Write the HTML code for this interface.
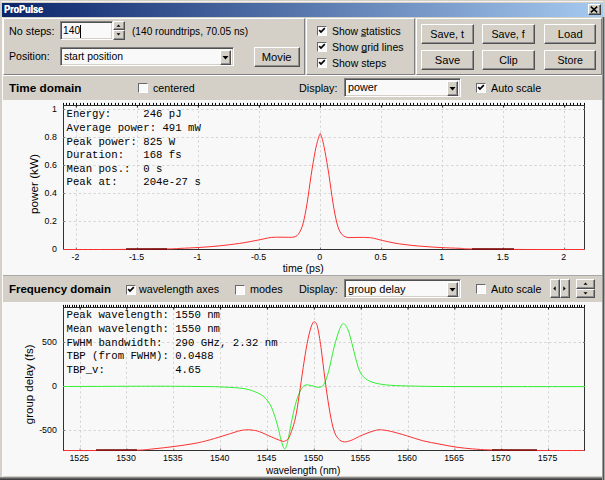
<!DOCTYPE html>
<html lang="en"><head><meta charset="utf-8"><title>ProPulse</title>
<style>
html,body{margin:0;padding:0}
body{width:605px;height:480px;overflow:hidden;background:#d4d0c8;font-family:"Liberation Sans",sans-serif;font-size:11px;color:#000;position:relative}
div,span{box-sizing:border-box}
.a{position:absolute}
.title{position:absolute;left:2px;top:3px;width:601px;height:14px;background:linear-gradient(90deg,#0a246a 0%,#a6caf0 100%)}
.title span{position:absolute;left:2px;top:0;font-weight:bold;font-size:10px;line-height:14px;color:#fff;transform-origin:0 0;transform:translateY(0.4px) scaleX(0.9);text-shadow:0.4px 0 0 #fff}
.close{position:absolute;left:588px;top:4px;width:13px;height:11px;background:#d4d0c8;border:1px solid;border-color:#fff #404040 #404040 #fff;box-shadow:inset -1px -1px 0 #808080}
.panel{position:absolute;border:1px solid;border-color:#fff #808080 #808080 #fff}
.lbl{position:absolute;white-space:nowrap;line-height:13px;font-size:11px;transform-origin:0 0}
.b{font-weight:bold}
.btn{position:absolute;text-align:center;background:#d4d0c8;border:1px solid;border-color:#fff #505050 #505050 #fff;box-shadow:inset -1px -1px 0 #909090;font-size:11px;white-space:nowrap}
.sunk{position:absolute;background:#f9f9f9;border:1px solid;border-color:#808080 #fff #fff #808080;box-shadow:inset 1px 1px 0 #505050, inset -1px -1px 0 #d4d0c8}
.ctext{position:absolute;left:4px;top:2px;line-height:13px;font-size:11px;white-space:nowrap;transform-origin:0 0}
.cbtn{position:absolute;right:2px;top:2px;width:11px;background:#d4d0c8;border:1px solid;border-color:#fff #505050 #505050 #fff;box-shadow:inset -1px -1px 0 #909090;display:flex;align-items:center;justify-content:center}
.chk{position:absolute;width:10px;height:10px;background:#f9f9f9;border:1px solid;border-color:#686868 #fff #fff #686868}
.white{position:absolute;background:#f8f8f8}
svg text{font-family:"Liberation Sans",sans-serif}
.tk{font-size:8.8px;fill:#000}
.ax{font-size:10.3px;fill:#000}
.ay{font-size:11.5px;fill:#000}
.st{font-family:"Liberation Mono",monospace;font-size:10.67px;fill:#000}
u{text-decoration:underline;text-decoration-skip-ink:none}
</style></head><body>
<!-- window frame -->
<div class="a" style="left:1px;top:1px;width:602px;height:1px;background:#f4f2ee"></div>
<div class="a" style="left:2px;top:17px;width:1px;height:460px;background:#fbfaf8"></div>
<div class="a" style="left:0;top:477px;width:605px;height:1px;background:#8c8c8c"></div>
<div class="a" style="left:0;top:478px;width:605px;height:1px;background:#606060"></div>
<div class="a" style="left:0;top:479px;width:605px;height:1px;background:#404040"></div>
<div class="a" style="left:602px;top:17px;width:1px;height:463px;background:#9a9a9a"></div>
<div class="a" style="left:603px;top:17px;width:1px;height:463px;background:#545454"></div>
<div class="a" style="left:604px;top:17px;width:1px;height:463px;background:#a8a8a8"></div>
<!-- title bar -->
<div class="title"><span>ProPulse</span></div>
<div class="close"><svg width="8" height="7" viewBox="0 0 8 7" style="position:absolute;left:1px;top:1px"><path d="M0.8,0.6 L7.2,6.4 M7.2,0.6 L0.8,6.4" stroke="#000" stroke-width="1.5" fill="none"/></svg></div>

<!-- top panels -->
<div class="panel" style="left:3px;top:18px;width:302px;height:57px"></div>
<div class="panel" style="left:306px;top:18px;width:109px;height:57px"></div>
<div class="panel" style="left:416px;top:18px;width:186px;height:57px"></div>

<div class="lbl " style="left:9px;top:24px;transform:translateY(0.5px) scaleX(0.9793)">No steps:</div>
<div class="sunk" style="left:60px;top:21px;width:53px;height:19px"><span class="ctext" style="left:1.8px;top:2px;transform:scaleX(0.93)">140</span><div class="a" style="left:19px;top:3px;width:1px;height:13px;background:#000"></div></div>
<div class="btn" style="left:113px;top:21px;width:12px;height:9px"><svg width="5" height="3" viewBox="0 0 5 3" style="position:absolute;left:2px;top:2px"><path d="M0.5,2.8 H4.5 L2.5,0.4 Z" fill="#000"/></svg></div>
<div class="btn" style="left:113px;top:30px;width:12px;height:10px"><svg width="5" height="3" viewBox="0 0 5 3" style="position:absolute;left:2px;top:2px"><path d="M0.5,0.2 H4.5 L2.5,2.6 Z" fill="#000"/></svg></div>
<div class="lbl " style="left:131.5px;top:24px;transform:translateY(0.5px) scaleX(0.9210)">(140 roundtrips, 70.05 ns)</div>
<div class="lbl " style="left:9px;top:50px;transform:scaleX(0.9623)">Position:</div>
<div class="sunk" style="left:60px;top:47px;width:174px;height:19px"><span class="ctext" style="left:2.8px;top:2px;transform:scaleX(0.9461)">start position</span><div class="cbtn" style="height:15px"><svg width="7" height="4" viewBox="0 0 7 4"><path d="M0.5,0 H6.5 L3.5,3.5 Z" fill="#000"/></svg></div></div>
<div class="btn" style="left:254px;top:47px;width:46px;height:20px;line-height:18px"><span style="display:inline-block;transform:scaleX(1.0157)">Movie</span></div>

<div class="chk" style="left:317px;top:26px"><svg width="10" height="10" viewBox="0 0 10 10" style="position:absolute;left:-1px;top:-1px"><path d="M2.2,4.2 L4,6 L7.8,2.2" stroke="#000" stroke-width="1.7" fill="none"/></svg></div><div class="lbl " style="left:332px;top:24px;transform:translateY(0.5px) scaleX(0.9458)">Show <u>s</u>tatistics</div>
<div class="chk" style="left:317px;top:42px"><svg width="10" height="10" viewBox="0 0 10 10" style="position:absolute;left:-1px;top:-1px"><path d="M2.2,4.2 L4,6 L7.8,2.2" stroke="#000" stroke-width="1.7" fill="none"/></svg></div><div class="lbl " style="left:332px;top:40px;transform:translateY(0.5px) scaleX(0.9586)">Show <u>g</u>rid lines</div>
<div class="chk" style="left:317px;top:58px"><svg width="10" height="10" viewBox="0 0 10 10" style="position:absolute;left:-1px;top:-1px"><path d="M2.2,4.2 L4,6 L7.8,2.2" stroke="#000" stroke-width="1.7" fill="none"/></svg></div><div class="lbl " style="left:332px;top:56px;transform:translateY(0.5px) scaleX(0.9550)">Show steps</div>

<div class="btn" style="left:421px;top:24px;width:53px;height:20px;line-height:18px"><span style="display:inline-block;transform:scaleX(0.9843)">Save, t</span></div>
<div class="btn" style="left:482px;top:24px;width:53px;height:20px;line-height:18px"><span style="display:inline-block;transform:scaleX(0.9726)">Save, f</span></div>
<div class="btn" style="left:544px;top:24px;width:52px;height:20px;line-height:18px"><span style="display:inline-block;transform:scaleX(1.0136)">Load</span></div>
<div class="btn" style="left:421px;top:50px;width:53px;height:20px;line-height:18px"><span style="display:inline-block;transform:scaleX(1.0131)">Save</span></div>
<div class="btn" style="left:482px;top:50px;width:53px;height:20px;line-height:18px"><span style="display:inline-block;transform:scaleX(0.9763)">Clip</span></div>
<div class="btn" style="left:544px;top:50px;width:52px;height:20px;line-height:18px"><span style="display:inline-block;transform:scaleX(0.9661)">Store</span></div>

<!-- time domain strip -->
<div class="a" style="left:3px;top:75px;width:599px;height:1px;background:#fff"></div>
<div class="lbl b" style="left:9px;top:82px;transform:scaleX(1.0719)">Time domain</div>
<div class="chk" style="left:138px;top:83px"></div><div class="lbl " style="left:153px;top:82px;transform:scaleX(0.9765)">centered</div>
<div class="lbl " style="left:299px;top:82px;transform:scaleX(0.9841)">Display:</div>
<div class="sunk" style="left:344px;top:78px;width:117px;height:19px"><span class="ctext" style="left:2.5px;top:2px;transform:scaleX(0.9814)">power</span><div class="cbtn" style="height:15px"><svg width="7" height="4" viewBox="0 0 7 4"><path d="M0.5,0 H6.5 L3.5,3.5 Z" fill="#000"/></svg></div></div>
<div class="chk" style="left:476px;top:83px"><svg width="10" height="10" viewBox="0 0 10 10" style="position:absolute;left:-1px;top:-1px"><path d="M2.2,4.2 L4,6 L7.8,2.2" stroke="#000" stroke-width="1.7" fill="none"/></svg></div><div class="lbl " style="left:491px;top:82px;transform:scaleX(0.9774)">Auto scale</div>

<!-- plot area 1 -->
<div class="white" style="left:3px;top:100px;width:599px;height:175px"></div>
<!-- freq strip -->
<div class="a" style="left:3px;top:275px;width:599px;height:1px;background:#a8a8a8"></div>
<div class="lbl b" style="left:9px;top:283px;transform:scaleX(1.0431)">Frequency domain</div>
<div class="chk" style="left:126px;top:285px"><svg width="10" height="10" viewBox="0 0 10 10" style="position:absolute;left:-1px;top:-1px"><path d="M2.2,4.2 L4,6 L7.8,2.2" stroke="#000" stroke-width="1.7" fill="none"/></svg></div><div class="lbl " style="left:139px;top:283px;transform:scaleX(0.9764)">wavelength axes</div>
<div class="chk" style="left:235px;top:285px"></div><div class="lbl " style="left:249.5px;top:283px;transform:scaleX(0.9875)">modes</div>
<div class="lbl " style="left:299px;top:283px;transform:scaleX(0.9892)">Display:</div>
<div class="sunk" style="left:344px;top:279px;width:117px;height:19px"><span class="ctext" style="left:2.5px;top:3px;transform:scaleX(1.0021)">group delay</span><div class="cbtn" style="height:15px"><svg width="7" height="4" viewBox="0 0 7 4"><path d="M0.5,0 H6.5 L3.5,3.5 Z" fill="#000"/></svg></div></div>
<div class="chk" style="left:476px;top:284px"></div><div class="lbl " style="left:490.5px;top:283px;transform:scaleX(0.9832)">Auto scale</div>
<div class="btn" style="left:550px;top:279px;width:10px;height:19px"><svg width="3" height="5" viewBox="0 0 3 5" style="position:absolute;left:2px;top:6px"><path d="M2.7,0.3 V4.7 L0.3,2.5 Z" fill="#000"/></svg></div>
<div class="btn" style="left:560px;top:279px;width:10px;height:19px"><svg width="3" height="5" viewBox="0 0 3 5" style="position:absolute;left:2px;top:6px"><path d="M0.3,0.3 V4.7 L2.7,2.5 Z" fill="#000"/></svg></div>
<div class="btn" style="left:576px;top:279px;width:19px;height:10px"><svg width="5" height="3" viewBox="0 0 5 3" style="position:absolute;left:6px;top:2px"><path d="M0.5,2.8 H4.5 L2.5,0.4 Z" fill="#000"/></svg></div>
<div class="btn" style="left:576px;top:289px;width:19px;height:9px"><svg width="5" height="3" viewBox="0 0 5 3" style="position:absolute;left:6px;top:2px"><path d="M0.5,0.2 H4.5 L2.5,2.6 Z" fill="#000"/></svg></div>
<!-- plot area 2 -->
<div class="white" style="left:3px;top:302px;width:599px;height:174px"></div>

<svg class="a" style="left:0;top:0" width="605" height="480" viewBox="0 0 605 480">
<path d="M76.5,106 V249 M137.5,106 V249 M198.5,106 V249 M259.5,106 V249 M320.5,106 V249 M381.5,106 V249 M442.5,106 V249 M503.5,106 V249 M564.5,106 V249 " stroke="#d4d4d4" stroke-width="1" stroke-dasharray="2.2,2.7" fill="none"/>
<path d="M64,249.5 H585 M64,221.5 H585 M64,193.5 H585 M64,165.5 H585 M64,137.5 H585 M64,109.5 H585 " stroke="#d4d4d4" stroke-width="1" stroke-dasharray="2.4,2.5" fill="none"/>
<path d="M63.5,102.9 V105.5 M66.5,102.9 V105.5 M69.5,102.9 V105.5 M73.5,102.9 V105.5 M76.5,102.9 V105.5 M80.5,102.9 V105.5 M83.5,102.9 V105.5 M87.5,102.9 V105.5 M90.5,102.9 V105.5 M94.5,102.9 V105.5 M97.5,102.9 V105.5 M101.5,102.9 V105.5 M104.5,102.9 V105.5 M108.5,102.9 V105.5 M111.5,102.9 V105.5 M115.5,102.9 V105.5 M118.5,102.9 V105.5 M122.5,102.9 V105.5 M125.5,102.9 V105.5 M128.5,102.9 V105.5 M132.5,102.9 V105.5 M135.5,102.9 V105.5 M139.5,102.9 V105.5 M142.5,102.9 V105.5 M146.5,102.9 V105.5 M149.5,102.9 V105.5 M153.5,102.9 V105.5 M156.5,102.9 V105.5 M160.5,102.9 V105.5 M163.5,102.9 V105.5 M167.5,102.9 V105.5 M170.5,102.9 V105.5 M174.5,102.9 V105.5 M177.5,102.9 V105.5 M181.5,102.9 V105.5 M184.5,102.9 V105.5 M188.5,102.9 V105.5 M191.5,102.9 V105.5 M194.5,102.9 V105.5 M198.5,102.9 V105.5 M201.5,102.9 V105.5 M205.5,102.9 V105.5 M208.5,102.9 V105.5 M212.5,102.9 V105.5 M215.5,102.9 V105.5 M219.5,102.9 V105.5 M222.5,102.9 V105.5 M226.5,102.9 V105.5 M229.5,102.9 V105.5 M233.5,102.9 V105.5 M236.5,102.9 V105.5 M240.5,102.9 V105.5 M243.5,102.9 V105.5 M247.5,102.9 V105.5 M250.5,102.9 V105.5 M254.5,102.9 V105.5 M257.5,102.9 V105.5 M260.5,102.9 V105.5 M264.5,102.9 V105.5 M267.5,102.9 V105.5 M271.5,102.9 V105.5 M274.5,102.9 V105.5 M278.5,102.9 V105.5 M281.5,102.9 V105.5 M285.5,102.9 V105.5 M288.5,102.9 V105.5 M292.5,102.9 V105.5 M295.5,102.9 V105.5 M299.5,102.9 V105.5 M302.5,102.9 V105.5 M306.5,102.9 V105.5 M309.5,102.9 V105.5 M313.5,102.9 V105.5 M316.5,102.9 V105.5 M320.5,102.9 V105.5 M323.5,102.9 V105.5 M326.5,102.9 V105.5 M330.5,102.9 V105.5 M333.5,102.9 V105.5 M337.5,102.9 V105.5 M340.5,102.9 V105.5 M344.5,102.9 V105.5 M347.5,102.9 V105.5 M351.5,102.9 V105.5 M354.5,102.9 V105.5 M358.5,102.9 V105.5 M361.5,102.9 V105.5 M365.5,102.9 V105.5 M368.5,102.9 V105.5 M372.5,102.9 V105.5 M375.5,102.9 V105.5 M379.5,102.9 V105.5 M382.5,102.9 V105.5 M386.5,102.9 V105.5 M389.5,102.9 V105.5 M392.5,102.9 V105.5 M396.5,102.9 V105.5 M399.5,102.9 V105.5 M403.5,102.9 V105.5 M406.5,102.9 V105.5 M410.5,102.9 V105.5 M413.5,102.9 V105.5 M417.5,102.9 V105.5 M420.5,102.9 V105.5 M424.5,102.9 V105.5 M427.5,102.9 V105.5 M431.5,102.9 V105.5 M434.5,102.9 V105.5 M438.5,102.9 V105.5 M441.5,102.9 V105.5 M445.5,102.9 V105.5 M448.5,102.9 V105.5 M452.5,102.9 V105.5 M455.5,102.9 V105.5 M458.5,102.9 V105.5 M462.5,102.9 V105.5 M465.5,102.9 V105.5 M469.5,102.9 V105.5 M472.5,102.9 V105.5 M476.5,102.9 V105.5 M479.5,102.9 V105.5 M483.5,102.9 V105.5 M486.5,102.9 V105.5 M490.5,102.9 V105.5 M493.5,102.9 V105.5 M497.5,102.9 V105.5 M500.5,102.9 V105.5 M504.5,102.9 V105.5 M507.5,102.9 V105.5 M511.5,102.9 V105.5 M514.5,102.9 V105.5 M518.5,102.9 V105.5 M521.5,102.9 V105.5 M524.5,102.9 V105.5 M528.5,102.9 V105.5 M531.5,102.9 V105.5 M535.5,102.9 V105.5 M538.5,102.9 V105.5 M542.5,102.9 V105.5 M545.5,102.9 V105.5 M549.5,102.9 V105.5 M552.5,102.9 V105.5 M556.5,102.9 V105.5 M559.5,102.9 V105.5 M563.5,102.9 V105.5 M566.5,102.9 V105.5 M570.5,102.9 V105.5 M573.5,102.9 V105.5 M577.5,102.9 V105.5 M580.5,102.9 V105.5 M584.5,102.9 V105.5 " stroke="#000" stroke-width="1" fill="none"/>
<rect x="63.5" y="105.5" width="521" height="144" stroke="#303030" stroke-width="1" fill="none"/>
<path d="M76.3,105 V107.5 M137.4,105 V107.5 M198.4,105 V107.5 M259.4,105 V107.5 M320.5,105 V107.5 M381.6,105 V107.5 M442.6,105 V107.5 M503.6,105 V107.5 M564.7,105 V107.5 " stroke="#181818" stroke-width="1" fill="none"/>
<path d="M76.3,247.5 V249 M137.4,247.5 V249 M198.4,247.5 V249 M259.4,247.5 V249 M320.5,247.5 V249 M381.6,247.5 V249 M442.6,247.5 V249 M503.6,247.5 V249 M564.7,247.5 V249 M63,249.5 H65 M583,249.5 H585 M63,221.5 H65 M583,221.5 H585 M63,193.5 H65 M583,193.5 H585 M63,165.5 H65 M583,165.5 H585 M63,137.5 H65 M583,137.5 H585 M63,109.5 H65 M583,109.5 H585 " stroke="#707070" stroke-width="1" fill="none"/>
<path d="M63.5,249.5 C69.6,249.5 89.8,249.5 100.0,249.5 C110.2,249.5 114.2,249.5 125.0,249.4 C135.8,249.3 155.8,249.2 165.0,249.0 C174.2,248.8 174.2,248.7 180.0,248.4 C185.8,248.1 193.4,247.8 200.0,247.4 C206.6,247.0 213.2,246.5 219.8,245.8 C226.4,245.1 233.1,244.4 239.7,243.4 C246.3,242.4 254.2,240.8 259.5,239.8 C264.8,238.8 267.6,237.8 271.4,237.4 C275.1,237.0 278.2,237.3 282.0,237.2 C285.8,237.1 291.1,237.7 294.0,237.0 C296.9,236.3 297.7,235.2 299.2,232.9 C300.7,230.6 301.9,227.9 303.2,223.0 C304.5,218.1 305.8,211.1 307.1,203.2 C308.4,195.3 309.8,184.0 311.1,175.4 C312.4,166.8 314.0,157.6 315.1,151.6 C316.2,145.6 317.3,142.2 318.0,139.5 C318.7,136.8 319.0,136.2 319.4,135.2 C319.8,134.2 319.9,133.6 320.2,133.6 C320.5,133.6 320.6,134.2 321.0,135.2 C321.4,136.2 321.7,136.8 322.4,139.5 C323.1,142.2 323.9,145.6 325.0,151.6 C326.1,157.6 327.7,166.8 329.0,175.4 C330.3,184.0 331.7,195.1 333.0,203.0 C334.3,210.9 335.6,218.0 336.9,223.0 C338.2,228.0 339.2,230.6 340.9,233.0 C342.5,235.4 343.9,236.6 346.8,237.3 C349.7,238.0 354.0,237.3 358.0,237.4 C362.0,237.5 366.5,237.2 370.6,237.7 C374.7,238.2 377.9,239.5 382.5,240.5 C387.1,241.5 392.4,242.8 398.4,243.7 C404.4,244.6 411.4,245.4 418.3,246.0 C425.2,246.6 433.1,247.1 440.0,247.5 C446.9,247.9 454.7,248.1 460.0,248.3 C465.3,248.6 463.0,248.8 472.0,249.0 C481.0,249.2 502.7,249.3 514.0,249.4 C525.3,249.5 528.2,249.5 540.0,249.5 C551.8,249.5 577.1,249.5 584.5,249.5" stroke="#ff3030" stroke-width="1" fill="none"/><path d="M126,249 H167 M472,249 H514" stroke="#700808" stroke-width="1.4" fill="none"/>
<text x="75.4" y="259.8" text-anchor="middle" class="tk">-2</text>
<text x="136.5" y="259.8" text-anchor="middle" class="tk">-1.5</text>
<text x="197.5" y="259.8" text-anchor="middle" class="tk">-1</text>
<text x="258.6" y="259.8" text-anchor="middle" class="tk">-0.5</text>
<text x="319.6" y="259.8" text-anchor="middle" class="tk">0</text>
<text x="380.7" y="259.8" text-anchor="middle" class="tk">0.5</text>
<text x="441.7" y="259.8" text-anchor="middle" class="tk">1</text>
<text x="502.8" y="259.8" text-anchor="middle" class="tk">1.5</text>
<text x="563.8" y="259.8" text-anchor="middle" class="tk">2</text>
<text x="56.8" y="252.3" text-anchor="end" class="tk">0</text>
<text x="56.8" y="224.3" text-anchor="end" class="tk">0.2</text>
<text x="56.8" y="196.3" text-anchor="end" class="tk">0.4</text>
<text x="56.8" y="168.3" text-anchor="end" class="tk">0.6</text>
<text x="56.8" y="140.3" text-anchor="end" class="tk">0.8</text>
<text x="56.8" y="112.3" text-anchor="end" class="tk">1</text>
<text x="282.7" y="272.4" textLength="41.1" lengthAdjust="spacingAndGlyphs" class="ax">time (ps)</text>
<text transform="translate(37.5,214.1) rotate(-90)" textLength="60" lengthAdjust="spacingAndGlyphs" class="ay">power (kW)</text>
<text x="66.5" y="117.3" class="st" xml:space="preserve">Energy:     246 pJ</text>
<text x="66.5" y="130.9" class="st" xml:space="preserve">Average power: 491 mW</text>
<text x="66.5" y="144.5" class="st" xml:space="preserve">Peak power: 825 W</text>
<text x="66.5" y="158.1" class="st" xml:space="preserve">Duration:   168 fs</text>
<text x="66.5" y="171.7" class="st" xml:space="preserve">Mean pos.:  0 s</text>
<text x="66.5" y="185.3" class="st" xml:space="preserve">Peak at:    204e-27 s</text>

<path d="M80.5,308 V450 M126.5,308 V450 M173.5,308 V450 M220.5,308 V450 M267.5,308 V450 M314.5,308 V450 M361.5,308 V450 M408.5,308 V450 M454.5,308 V450 M501.5,308 V450 M548.5,308 V450 " stroke="#d4d4d4" stroke-width="1" stroke-dasharray="2.2,2.7" fill="none"/>
<path d="M64,430.5 H585 M64,386.5 H585 M64,342.5 H585 " stroke="#d4d4d4" stroke-width="1" stroke-dasharray="2.4,2.5" fill="none"/>
<path d="M63.5,304.9 V307.5 M65.5,304.9 V307.5 M67.5,304.9 V307.5 M69.5,304.9 V307.5 M72.5,304.9 V307.5 M74.5,304.9 V307.5 M76.5,304.9 V307.5 M79.5,304.9 V307.5 M81.5,304.9 V307.5 M83.5,304.9 V307.5 M86.5,304.9 V307.5 M88.5,304.9 V307.5 M90.5,304.9 V307.5 M93.5,304.9 V307.5 M95.5,304.9 V307.5 M97.5,304.9 V307.5 M100.5,304.9 V307.5 M102.5,304.9 V307.5 M104.5,304.9 V307.5 M106.5,304.9 V307.5 M109.5,304.9 V307.5 M111.5,304.9 V307.5 M113.5,304.9 V307.5 M116.5,304.9 V307.5 M118.5,304.9 V307.5 M120.5,304.9 V307.5 M123.5,304.9 V307.5 M125.5,304.9 V307.5 M127.5,304.9 V307.5 M130.5,304.9 V307.5 M132.5,304.9 V307.5 M134.5,304.9 V307.5 M137.5,304.9 V307.5 M139.5,304.9 V307.5 M141.5,304.9 V307.5 M144.5,304.9 V307.5 M146.5,304.9 V307.5 M148.5,304.9 V307.5 M150.5,304.9 V307.5 M153.5,304.9 V307.5 M155.5,304.9 V307.5 M157.5,304.9 V307.5 M160.5,304.9 V307.5 M162.5,304.9 V307.5 M164.5,304.9 V307.5 M167.5,304.9 V307.5 M169.5,304.9 V307.5 M171.5,304.9 V307.5 M174.5,304.9 V307.5 M176.5,304.9 V307.5 M178.5,304.9 V307.5 M181.5,304.9 V307.5 M183.5,304.9 V307.5 M185.5,304.9 V307.5 M188.5,304.9 V307.5 M190.5,304.9 V307.5 M192.5,304.9 V307.5 M194.5,304.9 V307.5 M197.5,304.9 V307.5 M199.5,304.9 V307.5 M201.5,304.9 V307.5 M204.5,304.9 V307.5 M206.5,304.9 V307.5 M208.5,304.9 V307.5 M211.5,304.9 V307.5 M213.5,304.9 V307.5 M215.5,304.9 V307.5 M218.5,304.9 V307.5 M220.5,304.9 V307.5 M222.5,304.9 V307.5 M225.5,304.9 V307.5 M227.5,304.9 V307.5 M229.5,304.9 V307.5 M232.5,304.9 V307.5 M234.5,304.9 V307.5 M236.5,304.9 V307.5 M238.5,304.9 V307.5 M241.5,304.9 V307.5 M243.5,304.9 V307.5 M245.5,304.9 V307.5 M248.5,304.9 V307.5 M250.5,304.9 V307.5 M252.5,304.9 V307.5 M255.5,304.9 V307.5 M257.5,304.9 V307.5 M259.5,304.9 V307.5 M262.5,304.9 V307.5 M264.5,304.9 V307.5 M266.5,304.9 V307.5 M269.5,304.9 V307.5 M271.5,304.9 V307.5 M273.5,304.9 V307.5 M276.5,304.9 V307.5 M278.5,304.9 V307.5 M280.5,304.9 V307.5 M282.5,304.9 V307.5 M285.5,304.9 V307.5 M287.5,304.9 V307.5 M289.5,304.9 V307.5 M292.5,304.9 V307.5 M294.5,304.9 V307.5 M296.5,304.9 V307.5 M299.5,304.9 V307.5 M301.5,304.9 V307.5 M303.5,304.9 V307.5 M306.5,304.9 V307.5 M308.5,304.9 V307.5 M310.5,304.9 V307.5 M313.5,304.9 V307.5 M315.5,304.9 V307.5 M317.5,304.9 V307.5 M320.5,304.9 V307.5 M322.5,304.9 V307.5 M324.5,304.9 V307.5 M326.5,304.9 V307.5 M329.5,304.9 V307.5 M331.5,304.9 V307.5 M333.5,304.9 V307.5 M336.5,304.9 V307.5 M338.5,304.9 V307.5 M340.5,304.9 V307.5 M343.5,304.9 V307.5 M345.5,304.9 V307.5 M347.5,304.9 V307.5 M350.5,304.9 V307.5 M352.5,304.9 V307.5 M354.5,304.9 V307.5 M357.5,304.9 V307.5 M359.5,304.9 V307.5 M361.5,304.9 V307.5 M364.5,304.9 V307.5 M366.5,304.9 V307.5 M368.5,304.9 V307.5 M370.5,304.9 V307.5 M373.5,304.9 V307.5 M375.5,304.9 V307.5 M377.5,304.9 V307.5 M380.5,304.9 V307.5 M382.5,304.9 V307.5 M384.5,304.9 V307.5 M387.5,304.9 V307.5 M389.5,304.9 V307.5 M391.5,304.9 V307.5 M394.5,304.9 V307.5 M396.5,304.9 V307.5 M398.5,304.9 V307.5 M401.5,304.9 V307.5 M403.5,304.9 V307.5 M405.5,304.9 V307.5 M408.5,304.9 V307.5 M410.5,304.9 V307.5 M412.5,304.9 V307.5 M414.5,304.9 V307.5 M417.5,304.9 V307.5 M419.5,304.9 V307.5 M421.5,304.9 V307.5 M424.5,304.9 V307.5 M426.5,304.9 V307.5 M428.5,304.9 V307.5 M431.5,304.9 V307.5 M433.5,304.9 V307.5 M435.5,304.9 V307.5 M438.5,304.9 V307.5 M440.5,304.9 V307.5 M442.5,304.9 V307.5 M445.5,304.9 V307.5 M447.5,304.9 V307.5 M449.5,304.9 V307.5 M452.5,304.9 V307.5 M454.5,304.9 V307.5 M456.5,304.9 V307.5 M458.5,304.9 V307.5 M461.5,304.9 V307.5 M463.5,304.9 V307.5 M465.5,304.9 V307.5 M468.5,304.9 V307.5 M470.5,304.9 V307.5 M472.5,304.9 V307.5 M475.5,304.9 V307.5 M477.5,304.9 V307.5 M479.5,304.9 V307.5 M482.5,304.9 V307.5 M484.5,304.9 V307.5 M486.5,304.9 V307.5 M489.5,304.9 V307.5 M491.5,304.9 V307.5 M493.5,304.9 V307.5 M496.5,304.9 V307.5 M498.5,304.9 V307.5 M500.5,304.9 V307.5 M502.5,304.9 V307.5 M505.5,304.9 V307.5 M507.5,304.9 V307.5 M509.5,304.9 V307.5 M512.5,304.9 V307.5 M514.5,304.9 V307.5 M516.5,304.9 V307.5 M519.5,304.9 V307.5 M521.5,304.9 V307.5 M523.5,304.9 V307.5 M526.5,304.9 V307.5 M528.5,304.9 V307.5 M530.5,304.9 V307.5 M533.5,304.9 V307.5 M535.5,304.9 V307.5 M537.5,304.9 V307.5 M540.5,304.9 V307.5 M542.5,304.9 V307.5 M544.5,304.9 V307.5 M546.5,304.9 V307.5 M549.5,304.9 V307.5 M551.5,304.9 V307.5 M553.5,304.9 V307.5 M556.5,304.9 V307.5 M558.5,304.9 V307.5 M560.5,304.9 V307.5 M563.5,304.9 V307.5 M565.5,304.9 V307.5 M567.5,304.9 V307.5 M570.5,304.9 V307.5 M572.5,304.9 V307.5 M574.5,304.9 V307.5 M577.5,304.9 V307.5 M579.5,304.9 V307.5 M581.5,304.9 V307.5 M584.5,304.9 V307.5 " stroke="#000" stroke-width="1" fill="none"/>
<rect x="63.5" y="307.5" width="521" height="143" stroke="#303030" stroke-width="1" fill="none"/>
<path d="M80.1,307 V309.5 M126.9,307 V309.5 M173.8,307 V309.5 M220.6,307 V309.5 M267.4,307 V309.5 M314.3,307 V309.5 M361.2,307 V309.5 M408.0,307 V309.5 M454.9,307 V309.5 M501.7,307 V309.5 M548.5,307 V309.5 " stroke="#181818" stroke-width="1" fill="none"/>
<path d="M80.1,448.5 V450 M126.9,448.5 V450 M173.8,448.5 V450 M220.6,448.5 V450 M267.4,448.5 V450 M314.3,448.5 V450 M361.2,448.5 V450 M408.0,448.5 V450 M454.9,448.5 V450 M501.7,448.5 V450 M548.5,448.5 V450 M63,430.5 H65 M583,430.5 H585 M63,386.5 H65 M583,386.5 H585 M63,342.5 H65 M583,342.5 H585 " stroke="#707070" stroke-width="1" fill="none"/>
<path d="M63.0,386.5 C72.5,386.5 103.8,386.4 120.0,386.3 C136.2,386.2 146.7,386.2 160.0,386.2 C173.3,386.2 190.0,386.4 200.0,386.5 C210.0,386.6 213.2,386.6 219.8,386.9 C226.4,387.2 234.4,387.5 239.7,388.1 C245.0,388.7 247.6,389.1 251.6,390.5 C255.6,391.9 260.2,393.6 263.5,396.4 C266.8,399.2 269.1,402.3 271.4,407.1 C273.7,411.9 275.8,419.4 277.4,425.0 C279.0,430.6 280.1,436.9 281.3,440.9 C282.5,444.9 283.5,448.5 284.5,448.8 C285.5,449.1 286.2,447.2 287.3,442.9 C288.4,438.6 290.0,429.3 291.3,423.0 C292.6,416.7 293.9,410.1 295.2,405.2 C296.5,400.2 297.9,396.4 299.2,393.3 C300.5,390.2 301.9,387.9 303.2,386.5 C304.5,385.1 305.5,385.0 307.1,384.9 C308.8,384.8 311.1,385.7 313.1,386.1 C315.1,386.5 317.2,387.6 319.0,387.3 C320.8,387.0 322.2,387.1 323.8,384.5 C325.4,381.9 326.9,377.5 328.6,371.4 C330.3,365.2 332.2,354.5 334.0,347.6 C335.8,340.7 337.8,333.8 339.4,329.8 C341.0,325.8 342.0,323.6 343.4,323.6 C344.8,323.6 346.6,326.5 348.0,329.8 C349.4,333.1 350.7,338.8 352.0,343.7 C353.3,348.6 354.7,354.9 356.0,359.5 C357.3,364.1 358.2,368.2 359.8,371.4 C361.4,374.6 363.0,376.7 365.5,378.6 C368.0,380.5 370.4,381.8 374.6,382.9 C378.8,384.0 383.9,384.8 390.5,385.3 C397.1,385.8 406.1,385.9 414.3,386.1 C422.6,386.3 425.7,386.4 440.0,386.5 C454.3,386.6 475.8,386.6 500.0,386.6 C524.2,386.6 570.8,386.6 585.0,386.6" stroke="#30f030" stroke-width="1" fill="none"/><path d="M63.5,450.5 C68.9,450.5 83.8,450.6 96.0,450.5 C108.2,450.4 127.3,450.5 137.0,450.2 C146.7,449.9 147.8,449.4 154.0,448.8 C160.2,448.2 167.4,447.4 174.0,446.5 C180.6,445.6 187.7,444.7 193.8,443.6 C199.9,442.5 204.9,441.2 210.4,439.7 C215.9,438.2 222.0,436.2 226.9,434.7 C231.8,433.2 236.7,431.5 240.0,430.7 C243.3,429.9 244.8,429.9 247.0,429.8 C249.2,429.7 250.9,429.9 253.0,430.2 C255.1,430.5 256.4,430.6 259.5,431.7 C262.6,432.8 267.8,435.4 271.4,436.9 C275.0,438.4 279.0,440.2 281.3,440.9 C283.6,441.6 283.7,441.7 285.0,441.0 C286.3,440.3 287.6,440.6 289.3,436.9 C291.0,433.2 293.6,425.9 295.2,419.0 C296.8,412.1 297.9,403.8 299.2,395.2 C300.5,386.6 301.9,376.1 303.2,367.5 C304.5,358.9 305.8,350.4 307.1,343.7 C308.4,336.9 309.9,330.6 311.1,327.0 C312.3,323.4 313.2,321.8 314.3,321.8 C315.4,321.8 316.4,322.7 317.5,327.0 C318.6,331.3 319.8,338.9 321.0,347.6 C322.2,356.3 323.7,369.5 325.0,379.4 C326.3,389.3 327.7,399.2 329.0,407.1 C330.3,415.0 331.6,422.0 332.9,427.0 C334.2,432.0 335.2,434.4 336.9,436.9 C338.6,439.3 340.6,441.1 342.9,441.7 C345.2,442.3 347.5,441.6 350.8,440.5 C354.1,439.4 358.7,436.5 362.7,434.9 C366.7,433.2 371.6,431.5 374.6,430.6 C377.6,429.8 378.0,429.7 380.6,429.8 C383.2,429.9 386.2,430.3 390.5,431.3 C394.8,432.3 401.1,434.1 406.5,435.7 C411.9,437.3 417.4,439.4 423.0,440.8 C428.6,442.2 434.5,443.1 440.0,444.2 C445.5,445.2 450.6,446.3 456.0,447.1 C461.4,447.9 467.1,448.4 472.6,448.9 C478.1,449.4 482.8,449.6 489.0,449.9 C495.2,450.1 502.0,450.3 510.0,450.4 C518.0,450.5 524.6,450.5 537.0,450.5 C549.4,450.5 576.6,450.5 584.5,450.5" stroke="#ff3030" stroke-width="1" fill="none"/><path d="M96,450 H137 M492,450 H537" stroke="#700808" stroke-width="1.4" fill="none"/>
<text x="79.2" y="460.8" text-anchor="middle" class="tk">1525</text>
<text x="126.0" y="460.8" text-anchor="middle" class="tk">1530</text>
<text x="172.8" y="460.8" text-anchor="middle" class="tk">1535</text>
<text x="219.7" y="460.8" text-anchor="middle" class="tk">1540</text>
<text x="266.6" y="460.8" text-anchor="middle" class="tk">1545</text>
<text x="313.4" y="460.8" text-anchor="middle" class="tk">1550</text>
<text x="360.3" y="460.8" text-anchor="middle" class="tk">1555</text>
<text x="407.1" y="460.8" text-anchor="middle" class="tk">1560</text>
<text x="454.0" y="460.8" text-anchor="middle" class="tk">1565</text>
<text x="500.8" y="460.8" text-anchor="middle" class="tk">1570</text>
<text x="547.6" y="460.8" text-anchor="middle" class="tk">1575</text>
<text x="56.8" y="433.3" text-anchor="end" class="tk">-500</text>
<text x="56.8" y="389.3" text-anchor="end" class="tk">0</text>
<text x="56.8" y="345.3" text-anchor="end" class="tk">500</text>
<text x="265.9" y="473.8" textLength="74.4" lengthAdjust="spacingAndGlyphs" class="ax">wavelength (nm)</text>
<text transform="translate(32.7,424.2) rotate(-90)" textLength="79.8" lengthAdjust="spacingAndGlyphs" class="ay">group delay (fs)</text>
<text x="66.5" y="318.3" class="st" xml:space="preserve">Peak wavelength: 1550 nm</text>
<text x="66.5" y="331.9" class="st" xml:space="preserve">Mean wavelength: 1550 nm</text>
<text x="66.5" y="345.5" class="st" xml:space="preserve">FWHM bandwidth:  290 GHz, 2.32 nm</text>
<text x="66.5" y="359.1" class="st" xml:space="preserve">TBP (from FWHM): 0.0488</text>
<text x="66.5" y="372.7" class="st" xml:space="preserve">TBP_v:           4.65</text>

</svg>
</body></html>
